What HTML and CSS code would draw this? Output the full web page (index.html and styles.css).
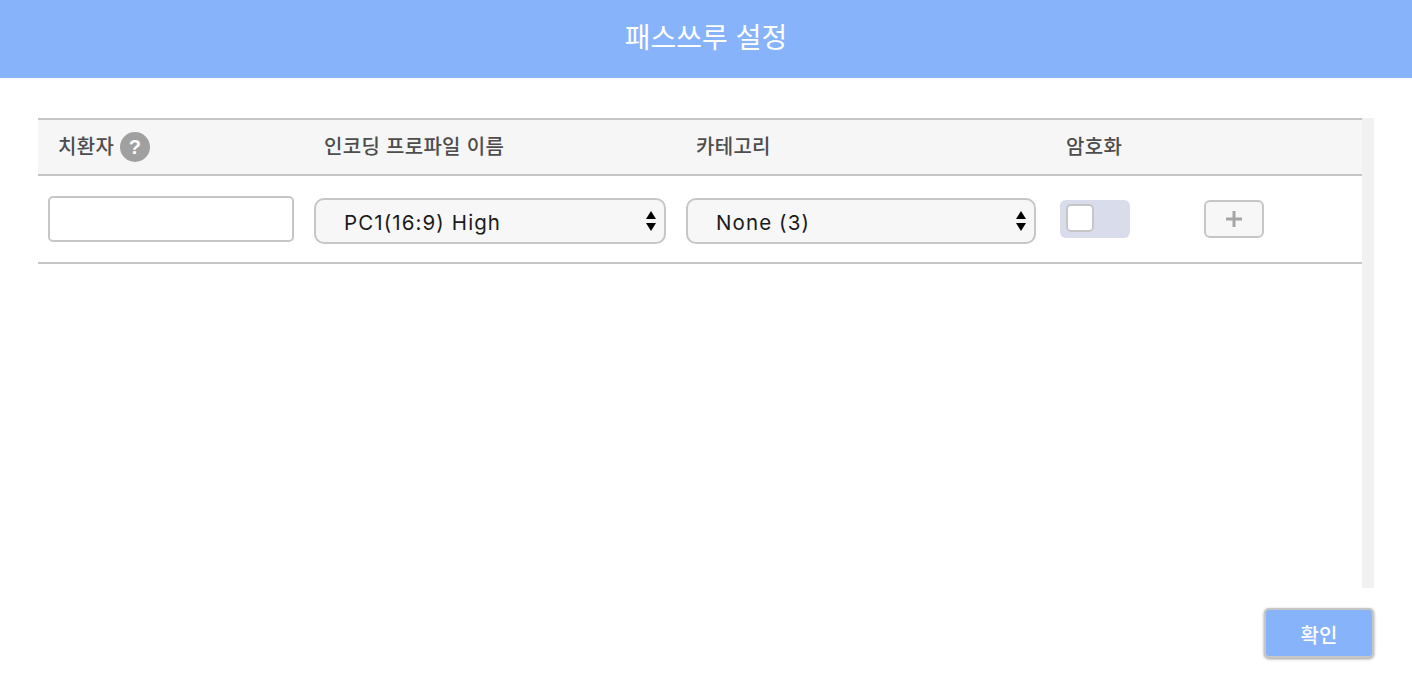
FILE: index.html
```html
<!DOCTYPE html>
<html lang="ko">
<head>
    <meta charset="utf-8" />
    <title>패스쓰루 설정</title>
    <meta name="viewport" content="width=device-width, initial-scale=1">
    <link rel="stylesheet" href="styles.css">
</head>
<body>
    <div class="dialog-title">패스쓰루 설정</div>
    <div class="dialog-body">
        <div class="list">
            <div class="list-head">
                <div class="head-cell">치환자 <span class="help">?</span></div>
                <div class="head-cell">인코딩 프로파일 이름</div>
                <div class="head-cell">카테고리</div>
                <div class="head-cell">암호화</div>
                <div class="head-cell"></div>
            </div>
            <div class="list-row">
                <div class="cell"><input class="text-edit" type="text"></div>
                <div class="cell">
                    <div class="select-wrap">
                        <select class="select-edit"><option>PC1(16:9) High</option></select>
                        <svg class="select-arrows" width="10" height="20" viewBox="0 0 10 20"><path d="M5 0L10 8H0Z M0 12H10L5 20Z" fill="#000"/></svg>
                    </div>
                </div>
                <div class="cell">
                    <div class="select-wrap">
                        <select class="select-edit"><option>None (3)</option></select>
                        <svg class="select-arrows" width="10" height="20" viewBox="0 0 10 20"><path d="M5 0L10 8H0Z M0 12H10L5 20Z" fill="#000"/></svg>
                    </div>
                </div>
                <div class="cell cell-toggle">
                    <label class="toggle"><span class="toggle-box"></span></label>
                </div>
                <div class="cell cell-add">
                    <div class="btn-add">
                        <svg width="16" height="16" viewBox="0 0 16 16"><path d="M6.500 0h3v6.500h6.500v3h-6.500v6.500h-3v-6.500h-6.500v-3h6.500z" fill="#a6a6a6"/></svg>
                    </div>
                </div>
            </div>
        </div>
        <div class="scroll-track"></div>
    </div>
    <div class="dialog-foot">
        <div class="btn-ok">확인</div>
    </div>
</body>
</html>
```

FILE: styles.css
```css
html, body {
    margin: 0;
    padding: 0;
}
body {
    width: 1412px;
    height: 692px;
    overflow: hidden;
    background: #fff;
    font-family: "Liberation Sans", "Noto Sans CJK KR", sans-serif;
}
.dialog-title {
    height: 78px;
    line-height: 72px;
    background: #87b3fb;
    color: #fff;
    font-family: "Noto Sans CJK KR", sans-serif;
    font-size: 28px;
    text-align: center;
}
.dialog-body {
    display: flex;
    height: 470px;
    margin: 40px 38px 0;
}
.list {
    width: 1324px;
}
.scroll-track {
    width: 12px;
    background: #f1f1f1;
}
.list-head, .list-row {
    display: grid;
    grid-template-columns: 266px 372px 370px 144px 172px;
}
.list-head {
    height: 54px;
    align-items: center;
    background: #f6f6f6;
    border-top: 2px solid #c6c6c6;
    border-bottom: 2px solid #c6c6c6;
}
.head-cell {
    display: flex;
    align-items: center;
    gap: 5px;
    padding-left: 20px;
    padding-bottom: 4px;
    color: #4d4d4d;
    font-family: "Noto Sans CJK KR", sans-serif;
    font-size: 20px;
    font-weight: 500;
    letter-spacing: .3px;
}
.help {
    width: 30px;
    height: 30px;
    margin: 4px 0 0 1px;
    border-radius: 50%;
    background: #a0a0a0;
    color: #fff;
    font-family: "Liberation Sans", sans-serif;
    font-size: 20px;
    font-weight: bold;
    line-height: 30px;
    text-align: center;
}
.list-row {
    height: 86px;
    border-bottom: 2px solid #c6c6c6;
}
.cell {
    padding: 20px 10px 0;
}
.text-edit {
    display: block;
    box-sizing: border-box;
    width: 246px;
    height: 46px;
    border: 2px solid #c6c6c6;
    border-radius: 5px;
    background: #fff;
}
.select-wrap {
    position: relative;
    margin-top: 2px;
}
.select-edit {
    display: block;
    box-sizing: border-box;
    width: 100%;
    height: 46px;
    padding: 3px 0 0 28px;
    border: 2px solid #c6c6c6;
    border-radius: 10px;
    background: #f7f7f7;
    color: #1a1a1a;
    font-family: Inter, "Liberation Sans", sans-serif;
    font-size: 20.5px;
    letter-spacing: 1.1px;
    appearance: none;
    -webkit-appearance: none;
}
.select-arrows {
    position: absolute;
    top: 13px;
    right: 10px;
}
.cell-toggle {
    padding: 24px 0 0 14px;
}
.toggle {
    display: block;
    box-sizing: border-box;
    width: 70px;
    height: 38px;
    padding: 4px 6px;
    border-radius: 6px;
    background: #d9dcea;
}
.toggle-box {
    display: block;
    box-sizing: border-box;
    width: 28px;
    height: 28px;
    border: 2px solid #c6c6c6;
    border-radius: 5px;
    background: #fff;
}
.cell-add {
    padding: 24px 0 0 14px;
}
.btn-add {
    display: flex;
    box-sizing: border-box;
    justify-content: center;
    align-items: center;
    width: 60px;
    height: 38px;
    border: 2px solid #c6c6c6;
    border-radius: 6px;
    background: #f7f7f7;
}
.dialog-foot {
    display: flex;
    justify-content: flex-end;
    padding: 20px 38px 0 0;
}
.btn-ok {
    box-sizing: border-box;
    width: 110px;
    height: 50px;
    border: 2px solid #c6c6c6;
    border-radius: 5px;
    background: #87b3fb;
    box-shadow: 0 1px 3px rgba(0, 0, 0, .4);
    color: #fff;
    font-family: "Noto Sans CJK KR", sans-serif;
    font-size: 20px;
    font-weight: 500;
    line-height: 50px;
    text-align: center;
}
```
